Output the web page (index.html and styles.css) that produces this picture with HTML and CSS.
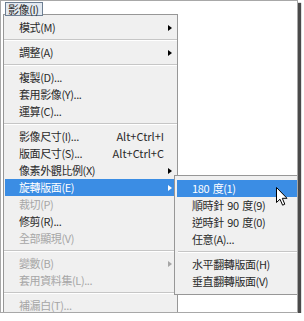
FILE: index.html
```html
<!DOCTYPE html>
<html lang="zh-Hant">
<head>
    <meta charset="UTF-8">
    <title>影像選單</title>
    <link rel="stylesheet" href="styles.css">
</head>
<body>
    <div class="shot">
        <div class="menubar">
            <span class="menu-title">影像(I)</span>
        </div>

        <ul class="menu">
            <li class="item has-sub"><span>模式(M)</span><span></span><span class="arrow"></span></li>
            <li class="sep"></li>
            <li class="item has-sub"><span>調整(A)</span><span></span><span class="arrow"></span></li>
            <li class="sep"></li>
            <li class="item"><span>複製(D)...</span></li>
            <li class="item"><span>套用影像(Y)...</span></li>
            <li class="item"><span>運算(C)...</span></li>
            <li class="sep"></li>
            <li class="item"><span>影像尺寸(I)...</span><span class="key">Alt+Ctrl+I</span></li>
            <li class="item"><span>版面尺寸(S)...</span><span class="key">Alt+Ctrl+C</span></li>
            <li class="item has-sub"><span>像素外觀比例(X)</span><span></span><span class="arrow"></span></li>
            <li class="item has-sub active"><span>旋轉版面(E)</span><span></span><span class="arrow"></span></li>
            <li class="item disabled"><span>裁切(P)</span></li>
            <li class="item"><span>修剪(R)...</span></li>
            <li class="item disabled"><span>全部顯現(V)</span></li>
            <li class="sep"></li>
            <li class="item has-sub disabled"><span>變數(B)</span><span></span><span class="arrow"></span></li>
            <li class="item disabled"><span>套用資料集(L)...</span></li>
            <li class="sep"></li>
            <li class="item disabled"><span>補漏白(T)...</span></li>
        </ul>

        <ul class="menu submenu">
            <li class="item active"><span>180 度(1)</span></li>
            <li class="item"><span>順時針 90 度(9)</span></li>
            <li class="item"><span>逆時針 90 度(0)</span></li>
            <li class="item"><span>任意(A)...</span></li>
            <li class="sep"></li>
            <li class="item"><span>水平翻轉版面(H)</span></li>
            <li class="item"><span>垂直翻轉版面(V)</span></li>
        </ul>

        <svg class="cursor" width="13" height="20" viewBox="0 0 13 20">
            <path d="M0.5 0.5 L0.5 15.5 L4 12.2 L6.6 18.2 L8.8 17.2 L6.3 11.3 L11 11.3 Z"
                  fill="#fff" stroke="#000" stroke-width="1" stroke-linejoin="round"/>
        </svg>
    </div>
</body>
</html>
```

FILE: styles.css
```css
:root {
    --menu-bg: #f0f0f0;
    --menu-border: #979797;
    --text-color: #2a2a2a;
    --disabled-color: #a6a6a6;
    --highlight: #3b8de4;
}

body {
    margin: 0;
    background: #fff;
    font-family: "Noto Sans CJK TC", "Noto Sans", sans-serif;
    font-size: 11px;
    color: var(--text-color);
}

.shot {
    position: relative;
    width: 296px;
    height: 311px;
    border: 1px solid #a8a8a8;
    box-shadow: 3px 3px 1px #4a4a4a;
    background: #fff;
    overflow: hidden;
}

.menubar {
    height: 13px;
}

.menu-title {
    display: inline-block;
    box-sizing: border-box;
    height: 14px;
    margin-left: 4px;
    padding: 0 3px 0 2px;
    border: 1px solid #6d7f93;
    background: #e3e9f0;
    line-height: 12px;
    letter-spacing: -0.4px;
}

.menu {
    list-style: none;
    margin: 0 0 0 2px;
    padding: 4px 1px;
    width: 171px;
    border: 1px solid var(--menu-border);
    background: var(--menu-bg);
}

.item {
    display: grid;
    grid-template-columns: 1fr auto 12px;
    align-items: center;
    height: 17px;
    line-height: 17px;
    padding-left: 14px;
    white-space: nowrap;
    letter-spacing: -0.4px;
    word-spacing: 1.5px;
}

.item .key {
    text-align: right;
    letter-spacing: 0;
}

.arrow {
    justify-self: start;
    margin-left: 4px;
    width: 0;
    height: 0;
    border-left: 4px solid #000;
    border-top: 3px solid transparent;
    border-bottom: 3px solid transparent;
}

.item.disabled {
    color: var(--disabled-color);
}

.item.disabled .arrow {
    border-left-color: var(--disabled-color);
}

.item.active {
    background: var(--highlight);
    color: #fff;
}

.item.active .arrow {
    border-left-color: #fff;
}

.sep {
    height: 1px;
    margin: 3px -1px;
    background: #c6c6c6;
    border-bottom: 1px solid #fff;
}

.submenu {
    position: absolute;
    left: 173px;
    top: 174px;
    width: 140px;
    padding: 4px 0 4px 2px;
    margin: 0;
}

.submenu .item {
    padding-left: 15px;
}

.submenu .sep {
    margin: 3px 0 3px 1px;
}

.cursor {
    position: absolute;
    left: 275px;
    top: 186px;
}
```
